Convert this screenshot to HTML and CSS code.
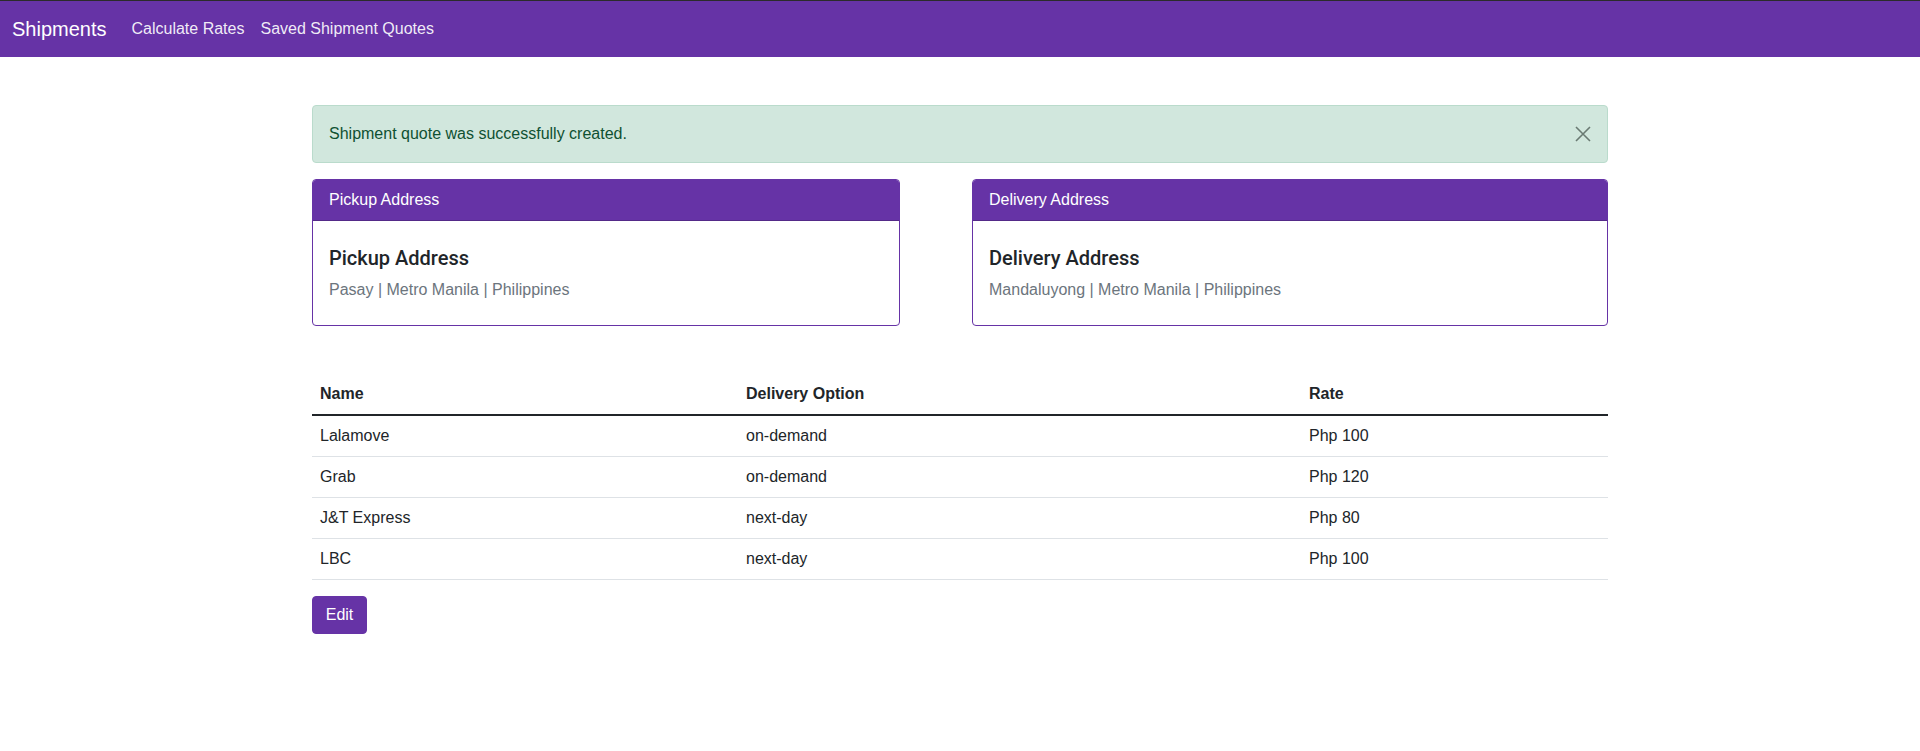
FILE: index.html
```html
<!DOCTYPE html>
<html lang="en">
<head>
<meta charset="utf-8">
<title>Shipments</title>
<link rel="stylesheet" href="styles.css">
</head>
<body>
<nav class="navbar">
  <a class="brand" href="#">Shipments</a>
  <ul class="nav">
    <li><a class="nav-link" href="#">Calculate Rates</a></li>
    <li><a class="nav-link" href="#">Saved Shipment Quotes</a></li>
  </ul>
</nav>
<main class="container">
  <div class="alert">
    <span>Shipment quote was successfully created.</span>
    <button class="btn-close" type="button" aria-label="Close">
      <svg viewBox="0 0 16 16" width="16" height="16"><path d="M1 1L15 15M15 1L1 15" stroke="#6a7a72" stroke-width="1.6" fill="none"/></svg>
    </button>
  </div>
  <div class="cards">
    <div class="card">
      <div class="card-header">Pickup Address</div>
      <div class="card-body">
        <h5 class="card-title">Pickup Address</h5>
        <h6 class="card-subtitle">Pasay | Metro Manila | Philippines</h6>
      </div>
    </div>
    <div class="card">
      <div class="card-header">Delivery Address</div>
      <div class="card-body">
        <h5 class="card-title">Delivery Address</h5>
        <h6 class="card-subtitle">Mandaluyong | Metro Manila | Philippines</h6>
      </div>
    </div>
  </div>
  <table class="table">
    <colgroup>
      <col class="col-name">
      <col class="col-opt">
      <col class="col-rate">
    </colgroup>
    <thead>
      <tr><th>Name</th><th>Delivery Option</th><th>Rate</th></tr>
    </thead>
    <tbody>
      <tr><td>Lalamove</td><td>on-demand</td><td>Php 100</td></tr>
      <tr><td>Grab</td><td>on-demand</td><td>Php 120</td></tr>
      <tr><td>J&amp;T Express</td><td>next-day</td><td>Php 80</td></tr>
      <tr><td>LBC</td><td>next-day</td><td>Php 100</td></tr>
    </tbody>
  </table>
  <a class="btn" href="#">Edit</a>
</main>
</body>
</html>
```
FILE: styles.css
```css
* { box-sizing: border-box; }
html, body { margin: 0; padding: 0; }
body {
  font-family: "Liberation Sans", Arial, sans-serif;
  font-size: 16px;
  line-height: 1.5;
  color: #212529;
  background: #fff;
  border-top: 1px solid #2b2b2b;
}
a { text-decoration: none; }

.navbar {
  background: #6633a6;
  height: 56px;
  display: flex;
  align-items: center;
  padding: 0 12px;
}
.brand {
  color: #fff;
  font-size: 20px;
  line-height: 30px;
  margin-right: 17px;
}
.nav {
  list-style: none;
  margin: 0;
  padding: 0;
  display: flex;
}
.nav-link {
  display: block;
  color: rgba(255,255,255,0.92);
  padding: 8px 8px;
  line-height: 24px;
}

.container {
  width: 1296px;
  margin: 48px auto 0;
}

.alert {
  position: relative;
  background: #d1e7dd;
  border: 1px solid #badbcc;
  color: #0f5132;
  border-radius: 4px;
  padding: 16px 48px 16px 16px;
  margin-bottom: 16px;
  line-height: 24px;
}
.btn-close {
  position: absolute;
  top: 0;
  right: 0;
  width: 48px;
  height: 56px;
  padding: 0;
  border: 0;
  background: transparent;
  display: flex;
  align-items: center;
  justify-content: center;
}
.btn-close svg { display: block; margin-top: -1px; }

.cards {
  display: grid;
  grid-template-columns: 588px 1fr;
  column-gap: 72px;
}
.card {
  border: 1px solid #6633a6;
  border-radius: 4px;
  overflow: hidden;
}
.card-header {
  background: #6633a6;
  color: #fff;
  padding: 8px 16px;
  line-height: 24px;
  border-bottom: 1px solid rgba(0,0,0,0.175);
}
.card-body {
  padding: 25px 16px 23px;
}
.card-title {
  margin: 0 0 8px;
  font-family: Roboto, "Liberation Sans", sans-serif;
  font-weight: 500;
  font-size: 20px;
  line-height: 24px;
}
.card-subtitle {
  margin: 0;
  font-weight: 400;
  font-size: 16px;
  line-height: 24px;
  color: #6c757d;
}

.table {
  width: 100%;
  table-layout: fixed;
  border-collapse: collapse;
  margin-top: 48px;
  margin-bottom: 16px;
}
.table th, .table td {
  text-align: left;
  padding: 8px;
  line-height: 24px;
  vertical-align: top;
}
.table th { font-weight: 700; }
.table thead tr { border-bottom: 2px solid #212529; }
.table tbody tr { border-bottom: 1px solid #dee2e6; }
.col-name { width: 426px; }
.col-opt { width: 563px; }

.btn {
  display: inline-block;
  min-width: 55px;
  text-align: center;
  background: #6633a6;
  color: #fff;
  border: 1px solid #6633a6;
  border-radius: 4px;
  padding: 6px 12px;
  line-height: 24px;
}
```
